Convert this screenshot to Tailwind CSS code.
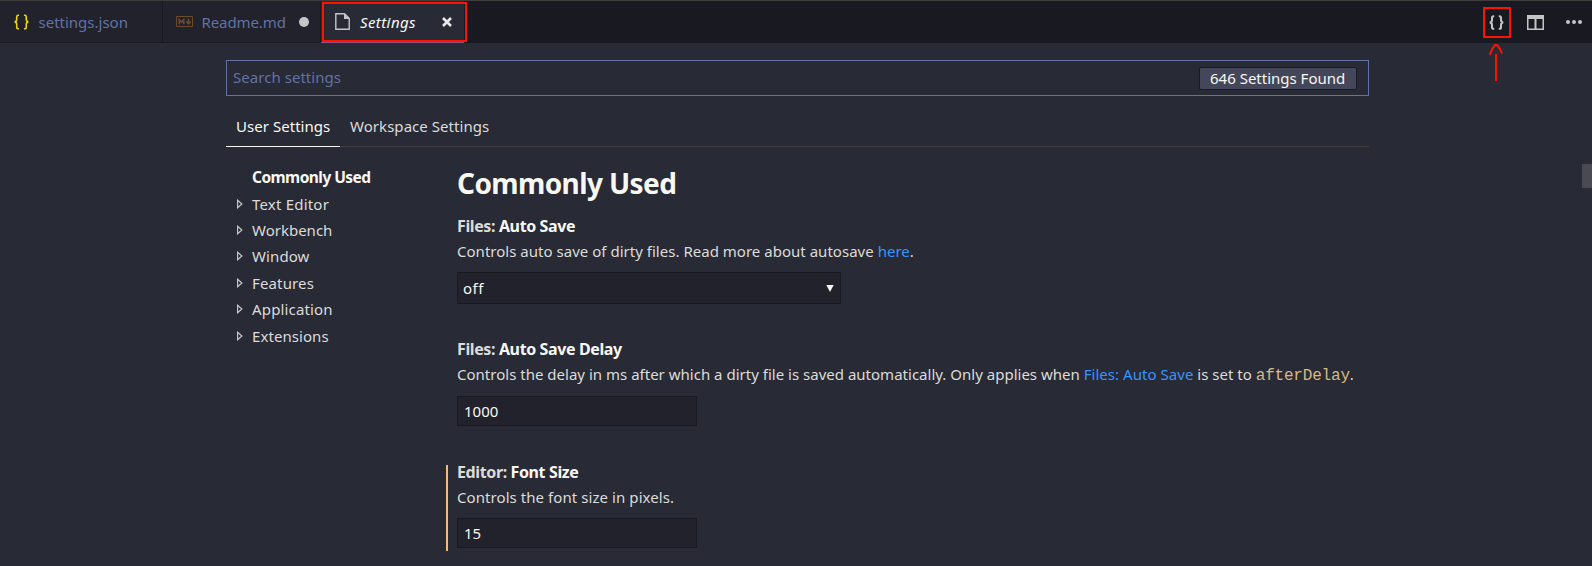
<!DOCTYPE html>
<html lang="en">
<head>
<meta charset="utf-8">
<title>Settings</title>
<script src="https://cdn.jsdelivr.net/npm/@tailwindcss/browser@4"></script>
</head>
<body class="relative w-[1592px] h-[566px] overflow-hidden bg-[#282a36] font-['Noto_Sans',sans-serif] text-[15px] leading-5 text-[#dcdcd8] whitespace-nowrap">

<!-- Editor tabs -->
<header class="flex h-[43px] border-t border-[#3e3d3c] bg-[#191a21]">
  <div class="flex w-[163px] items-center border-r border-b border-[#191a21] bg-[#21222c] pl-3.5 text-[#6272a4]">
    <svg class="h-4 w-[15px] shrink-0" viewBox="0 0 15 16" fill="none" stroke="#e8d21d" stroke-width="1.6"><path d="M5 1.2H4.4Q2.7 1.2 2.7 3V5.5Q2.7 7.6.6 7.9Q2.7 8.2 2.7 10.3V13Q2.7 14.8 4.4 14.8H5M10 1.2H10.6Q12.3 1.2 12.3 3V5.5Q12.3 7.6 14.4 7.9Q12.3 8.2 12.3 10.3V13Q12.3 14.8 10.6 14.8H10"/></svg>
    <span class="ml-[9.5px]">settings.json</span>
  </div>
  <div class="flex w-[158px] items-center border-r border-b border-[#191a21] bg-[#21222c] pl-[13px] text-[#6272a4]">
    <svg class="h-[11px] w-[17px] shrink-0" viewBox="0 0 17 11" fill="none" stroke="#6b4a30"><path d="M.5.5H16.5V10.5H.5Z"/><path stroke-width="1.6" d="M3.3 8.2V3.6L5.5 6.2L7.7 3.6V8.2M12.5 2.8V7.5M10.3 5.6L12.5 7.8L14.7 5.6"/></svg>
    <span class="ml-[8.5px] tracking-[-0.1px]">Readme.md</span>
    <span class="ml-[13px] size-2.5 rounded-full bg-[#c5c5c5]"></span>
  </div>
  <div class="flex w-[143px] items-center border-b border-[#94527e] bg-[#282a36] pl-3.5 text-[#f8f8f2]">
    <svg class="-mt-px h-[17px] w-[15px] shrink-0" viewBox="0 0 15 17" fill="none" stroke="#c5c5c5" stroke-width="1.4"><path d="M.8.8H9.5L14.2 5.2V16.2H.8Z"/><path fill="#c5c5c5" stroke="none" d="M9 .5L14.5 6H9Z"/></svg>
    <span class="ml-2.5 tracking-[0.4px] italic">Settings</span>
    <svg class="ml-[26px] size-[10px]" viewBox="0 0 10 10" stroke="#e8e8e8" stroke-width="2.6"><path d="M1 1L9 9M9 1L1 9"/></svg>
  </div>
  <div class="ml-auto flex items-center pr-[10px]">
    <svg class="h-[15px] w-[15px]" viewBox="0 0 15 15" fill="none" stroke="#c5c5c5" stroke-width="2"><path d="M5.2 1.2H4.6Q3 1.2 3 2.8V5Q3 7.2 .8 7.5Q3 7.8 3 10V12.2Q3 13.8 4.6 13.8H5.2M9.8 1.2H10.4Q12 1.2 12 2.8V5Q12 7.2 14.2 7.5Q12 7.8 12 10V12.2Q12 13.8 10.4 13.8H9.8"/></svg>
    <svg class="ml-[23px] h-[15px] w-[17px]" viewBox="0 0 17 15"><path fill="#c5c5c5" fill-rule="evenodd" d="M0 0H17V15H0ZM1.5 4V13.5H7.5V4ZM9.5 4V13.5H15.5V4Z"/></svg>
    <svg class="ml-[22px] h-1 w-4" viewBox="0 0 16 4" fill="#c5c5c5"><circle cx="2" cy="2" r="2"/><circle cx="8" cy="2" r="2"/><circle cx="14" cy="2" r="2"/></svg>
  </div>
</header>

<main class="ml-[226px] w-[1143px] pt-[17px]">
  <!-- Search -->
  <div class="flex h-9 items-center justify-between border border-[#6272a4] pr-[11px] pl-1.5">
    <span class="pb-0.5 tracking-[0.04px] text-[#6272a4]">Search settings</span>
    <span class="mt-px flex h-[23px] w-[158px] items-center rounded-[2px] border border-[#191a21] bg-[#44475a] pb-0.5 pl-2.5 text-[#f8f8f2]">646 Settings Found</span>
  </div>

  <!-- Scope tabs -->
  <div class="flex h-[51px]">
    <div class="w-[114px] border-b border-[#f8f8f2] pt-5 pl-2.5 tracking-[0.04px] text-[#f8f8f2]">User Settings</div>
    <div class="flex-1 border-b border-[#3e3d3c] pt-5 pl-2.5 tracking-[0.05px]">Workspace Settings</div>
  </div>

  <div class="flex">
    <nav class="w-[231px] pt-5">
      <div class="mb-[7px] pl-[26px] text-[15.5px] font-bold tracking-[-0.55px] text-[#f8f8f2]">Commonly Used</div>
      <div class="mb-1.5 flex items-center"><svg class="mr-[9px] ml-[11px] h-2.5 w-1.5" viewBox="0 0 6 10" fill="none" stroke="#c5c5c5" stroke-width="1.2"><path d="M.6 1.2L4.9 5L.6 8.8Z"/></svg><span class="tracking-[0.2px]">Text Editor</span></div>
      <div class="mb-1.5 flex items-center"><svg class="mr-[9px] ml-[11px] h-2.5 w-1.5" viewBox="0 0 6 10" fill="none" stroke="#c5c5c5" stroke-width="1.2"><path d="M.6 1.2L4.9 5L.6 8.8Z"/></svg><span>Workbench</span></div>
      <div class="mb-[7px] flex items-center"><svg class="mr-[9px] ml-[11px] h-2.5 w-1.5" viewBox="0 0 6 10" fill="none" stroke="#c5c5c5" stroke-width="1.2"><path d="M.6 1.2L4.9 5L.6 8.8Z"/></svg><span class="tracking-[0.1px]">Window</span></div>
      <div class="mb-1.5 flex items-center"><svg class="mr-[9px] ml-[11px] h-2.5 w-1.5" viewBox="0 0 6 10" fill="none" stroke="#c5c5c5" stroke-width="1.2"><path d="M.6 1.2L4.9 5L.6 8.8Z"/></svg><span class="tracking-[0.14px]">Features</span></div>
      <div class="mb-[7px] flex items-center"><svg class="mr-[9px] ml-[11px] h-2.5 w-1.5" viewBox="0 0 6 10" fill="none" stroke="#c5c5c5" stroke-width="1.2"><path d="M.6 1.2L4.9 5L.6 8.8Z"/></svg><span class="tracking-[0.16px]">Application</span></div>
      <div class="flex items-center"><svg class="mr-[9px] ml-[11px] h-2.5 w-1.5" viewBox="0 0 6 10" fill="none" stroke="#c5c5c5" stroke-width="1.2"><path d="M.6 1.2L4.9 5L.6 8.8Z"/></svg><span class="tracking-[0.07px]">Extensions</span></div>
    </nav>

    <div class="flex-1 pt-[18px]">
      <h1 class="h-[51px] text-[28px] leading-9 font-bold tracking-[-0.6px] text-[#f8f8f2]">Commonly Used</h1>

      <section class="h-[123px]">
        <h2 class="h-[25px] text-[16px] leading-5 font-bold tracking-[-0.38px]">Files: <span class="text-[#f8f8f2]">Auto Save</span></h2>
        <p class="tracking-[0.02px]">Controls auto save of dirty files. Read more about autosave <a class="text-[#3794ff]">here</a>.</p>
        <div class="mt-[11px] flex h-8 w-96 items-center justify-between border border-[#191a21] bg-[#21222c] pr-1.5 pl-[5px] text-[#f8f8f2]">
          <span class="tracking-[0.5px]">off</span>
          <svg class="h-[7px] w-[8px]" viewBox="0 0 8 7" fill="#f8f8f2"><path d="M.3 0H7.7L4 7Z"/></svg>
        </div>
      </section>

      <section class="h-[123px]">
        <h2 class="h-[25px] text-[16px] leading-5 font-bold tracking-[-0.38px]">Files: <span class="text-[#f8f8f2]">Auto Save Delay</span></h2>
        <p class="h-5 tracking-[0.01px]">Controls the delay in ms after which a dirty file is saved automatically. Only applies when <a class="tracking-[0.04px] text-[#3794ff]">Files: Auto Save</a> is set to <code class="font-['Liberation_Mono',monospace] text-[16px] tracking-[-0.2px] text-[#d7ba7d]">afterDelay</code>.</p>
        <div class="mt-3 flex h-[30px] w-60 items-center border border-[#191a21] bg-[#21222c] pl-1.5 text-[#f8f8f2]">1000</div>
      </section>

      <section class="relative">
        <div class="absolute top-[3px] -left-[11px] h-[86px] w-0.5 bg-[#ffb86c]"></div>
        <h2 class="h-[25px] text-[16px] leading-5 font-bold tracking-[-0.38px]">Editor: <span class="text-[#f8f8f2]">Font Size</span></h2>
        <p class="tracking-[0.07px]">Controls the font size in pixels.</p>
        <div class="mt-[11px] flex h-[30px] w-60 items-center border border-[#191a21] bg-[#21222c] pl-1.5 text-[#f8f8f2]">15</div>
      </section>
    </div>
  </div>
</main>

<!-- Scrollbar thumb -->
<div class="absolute top-[164px] right-0 h-6 w-2.5 bg-[#4a4a52]"></div>

<!-- Red annotations -->
<div class="absolute top-0.5 left-[322px] h-10 w-[145px] border-2 border-[#ff1100]"></div>
<div class="absolute top-[7px] left-[1483px] h-[31px] w-7 border-2 border-[#ff1100]"></div>
<svg class="absolute top-[43px] left-[1488px] h-[39px] w-4" viewBox="0 0 16 39" fill="none" stroke="#ff1100" stroke-width="2"><path d="M8 11V38M1.8 12Q3.5 6 7 2H9Q12 5 14 10.5"/></svg>
</body>
</html>
